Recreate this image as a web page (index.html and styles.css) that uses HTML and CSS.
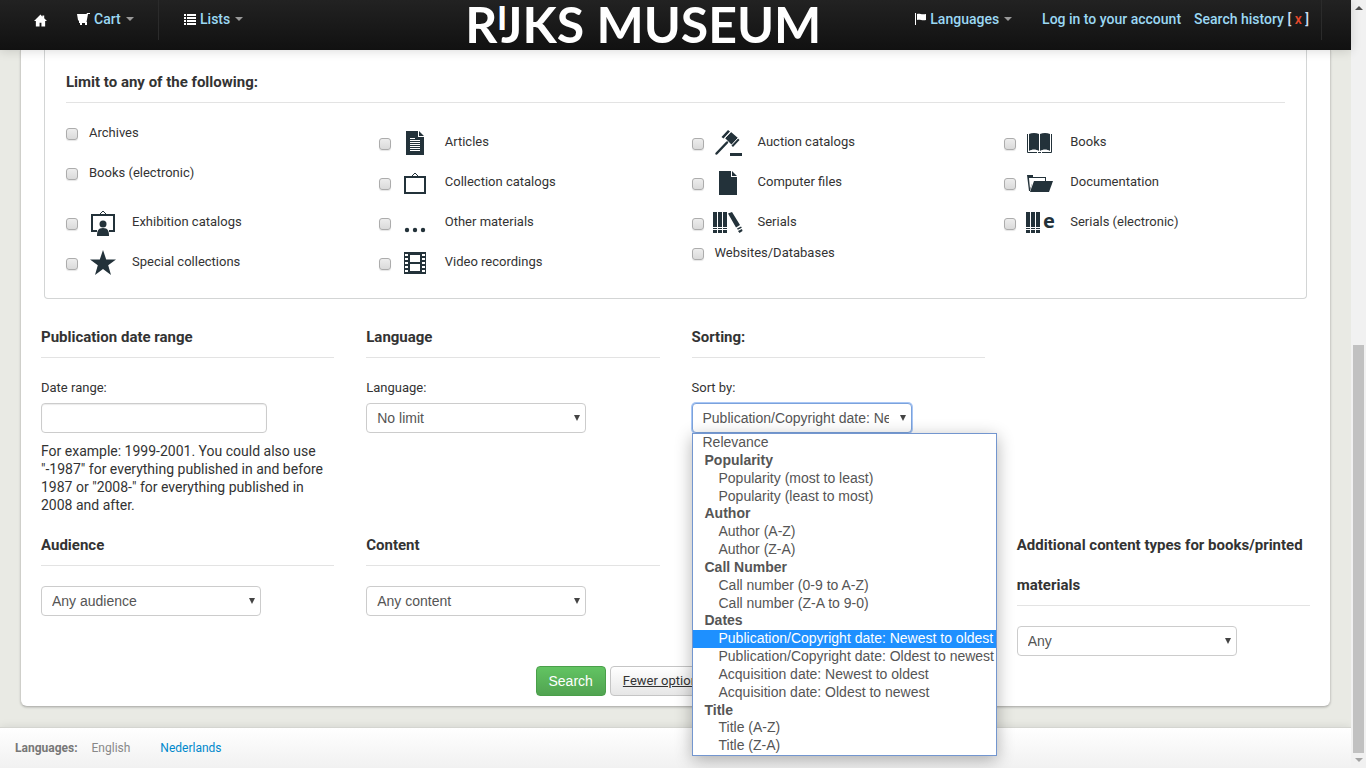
FILE: index.html
```html
<!DOCTYPE html>
<html lang="en">
<head>
<meta charset="utf-8">
<title>Rijksmuseum Research Library – Advanced search</title>
<link rel="stylesheet" href="styles.css">
</head>
<body>
<div class="page">
  <header class="navbar">
    <nav class="nav nav-left" aria-label="Main">
      <a class="nav-home" href="#" aria-label="Home"><svg width="13" height="13" viewBox="0 0 14 13" fill="#fff"><path d="M7 0 0 7h2v6h4V9h2v4h4V7h2l-3-3V1H9v1.500z"/></svg></a>
      <a class="nav-cart" href="#"><svg width="13" height="12" viewBox="0 0 13 12" fill="#fff"><path d="M0 1h9.500L10 0h3v1h-2L9.500 9H2V8L1 7z"/><path d="M2 9h8v1H2zM3 10h2v2H3zM8 10h2v2H8z"/></svg>Cart<i class="caret"></i></a>
      <a class="nav-lists" href="#"><svg width="12" height="11" viewBox="0 0 12 11" fill="#fff"><path d="M0 0h2v2H0zM3 0h9v2H3zM0 3h2v2H0zM3 3h9v2H3zM0 6h2v2H0zM3 6h9v2H3zM0 9h2v2H0zM3 9h9v2H3z"/></svg>Lists<i class="caret"></i></a>
    </nav>
    <a class="logo" href="#">R<span class="logo-i">I</span>JKS MUSEUM</a>
    <nav class="nav nav-right" aria-label="User">
      <a class="nav-lang" href="#"><svg width="11" height="12" viewBox="0 0 11 12" fill="#fff"><path d="M0 0h1v12H0zM2 1c3-1 4 1 9 0v6c-4 1-6-1-9 0z"/></svg>Languages<i class="caret"></i></a>
      <a class="nav-login" href="#">Log in to your account</a>
      <span class="nav-history"><a href="#">Search history</a> [ <a class="clear" href="#">x</a> ]</span>
    </nav>
  </header>

  <main class="panel">
    <form>
      <section class="limits">
        <h3>Limit to any of the following:</h3>
        <div class="types">
          <label class="type plain"><input type="checkbox">Archives</label>
          <label class="type"><input type="checkbox"><svg class="icon" viewBox="0 0 28 28"><path d="M5 2h12v6h6v18H5zM18 2l5 5h-5z"/><path d="M9 9.500h5M9 11.500h10M9 13.500h10M9 15.500h10M9 17.500h10M9 19.500h10M9 21.500h10" stroke="#fff"/></svg>Articles</label>
          <label class="type"><input type="checkbox"><svg class="icon" viewBox="0 0 28 28"><path d="m7.500 8 6.500-7 2 1.500-6.500 7zM11 9l6-6 7 6-6 7zM17.500 16.500l6.500-7 1.500 1.500-6.500 7zM16 24h12v3H16z"/><path d="M13 13.500 2.500 24.500" stroke="#23323a" stroke-width="2.500" stroke-linecap="round"/><path d="m10.500 9.500 6-6.500M17.500 16l6.500-7" stroke="#fff"/></svg>Auction catalogs</label>
          <label class="type"><input type="checkbox"><svg class="icon" viewBox="0 0 28 28"><path d="M3 5c3-1.500 7-1.500 10 0v17c-3-2-7-2-10 0zM14 5c3-1.500 7-1.500 10 0v17c-3-2-7-2-10 0z"/><path d="M1.500 5v18.500H11M25.500 5v18.500H16M12 23.500h3" fill="none" stroke="#23323a"/></svg>Books</label>

          <label class="type plain"><input type="checkbox">Books (electronic)</label>
          <label class="type"><input type="checkbox"><svg class="icon" viewBox="0 0 28 28"><path d="M4 8h20v16H4z" fill="none" stroke="#23323a" stroke-width="2"/><path d="m11 7 3-3 3 3" fill="none" stroke="#23323a"/></svg>Collection catalogs</label>
          <label class="type"><input type="checkbox"><svg class="icon" viewBox="0 0 28 28"><path d="M5 2h12v6h6v18H5zM18 2l5 5h-5z"/></svg>Computer files</label>
          <label class="type"><input type="checkbox"><svg class="icon" viewBox="0 0 28 28"><path d="M1 6h6v2h13v4h-1V9H4l2 5-2 8H3z"/><path d="M8 12h19l-4 11H4z"/><path d="M3 9h3l1 3-3 8z" fill="#fff"/></svg>Documentation</label>

          <label class="type"><input type="checkbox"><svg class="icon" viewBox="0 0 28 28"><path d="M9 22H4V6h22v16h-5" fill="none" stroke="#23323a" stroke-width="2"/><path d="m12 5 3-3 3 3" fill="none" stroke="#23323a"/><circle cx="15" cy="15" r="3.500"/><path d="M9 27c0-5 1-8 6-8s6 3 6 8z"/></svg>Exhibition catalogs</label>
          <label class="type"><input type="checkbox"><svg class="icon" viewBox="0 0 28 28"><circle cx="6" cy="21" r="2.200"/><circle cx="14" cy="21" r="2.200"/><circle cx="22" cy="21" r="2.200"/></svg>Other materials</label>
          <label class="type"><input type="checkbox"><svg class="icon" viewBox="0 0 28 28"><path d="M-1 3h4v15h-4zM4 3h4v15H4zM9 3h4v15H9zM-1 19h4v1h-4zM4 19h4v1H4zM9 19h4v1H9zM-1 21h4v3h-4zM4 21h4v3H4zM9 21h4v3H9z"/><path d="m14 4.500 4-1.500 8 13-4 2.500zM23 19.500l4-2 .800 1.200-4 2zM24 22l4-2 .500 2-3 2z"/></svg>Serials</label>
          <label class="type"><input type="checkbox"><svg class="icon" viewBox="0 0 28 28"><path d="M0 3h4v15H0zM5 3h4v15H5zM10 3h4v15h-4zM0 19h4v1H0zM5 19h4v1H5zM10 19h4v1h-4zM0 21h4v3H0zM5 21h4v3H5zM10 21h4v3h-4z"/><text class="icon-letter" x="17" y="19">e</text></svg>Serials (electronic)</label>

          <label class="type"><input type="checkbox"><svg class="icon" viewBox="0 0 28 28"><path d="m15 1 3.200 9.500H28l-7.800 5.800L23 26l-8-6-8 6 2.800-9.700L2 10.500h9.800z"/></svg>Special collections</label>
          <label class="type"><input type="checkbox"><svg class="icon" viewBox="0 0 28 28"><path d="M3 3h22v22H3z"/><path d="M9 6h10v7H9zM9 15h10v7H9zM4 5h3v2H4zM4 9h3v2H4zM4 13h3v2H4zM4 17h3v2H4zM4 21h3v2H4zM21 5h3v2h-3zM21 9h3v2h-3zM21 13h3v2h-3zM21 17h3v2h-3zM21 21h3v2h-3z" fill="#fff"/></svg>Video recordings</label>
          <label class="type plain"><input type="checkbox">Websites/Databases</label>
        </div>
      </section>

      <div class="options">
        <section>
          <h3>Publication date range</h3>
          <label class="field-label" for="date">Date range:</label>
          <input class="text-box" id="date" type="text">
          <p class="help">For example: 1999-2001. You could also use "-1987" for everything published in and before 1987 or "2008-" for everything published in 2008 and after.</p>
        </section>
        <section>
          <h3>Language</h3>
          <label class="field-label" for="language">Language:</label>
          <div class="select"><select id="language"><option>No limit</option></select></div>
        </section>
        <section>
          <h3>Sorting:</h3>
          <label class="field-label" for="sort">Sort by:</label>
          <div class="select open">
            <select id="sort"><option>Publication/Copyright date: Newest to oldest</option></select>
            <ul class="menu" role="listbox" aria-label="Sort by">
              <li class="top" role="option">Relevance</li>
              <li class="group">Popularity</li>
              <li role="option">Popularity (most to least)</li>
              <li role="option">Popularity (least to most)</li>
              <li class="group">Author</li>
              <li role="option">Author (A-Z)</li>
              <li role="option">Author (Z-A)</li>
              <li class="group">Call Number</li>
              <li role="option">Call number (0-9 to A-Z)</li>
              <li role="option">Call number (Z-A to 9-0)</li>
              <li class="group">Dates</li>
              <li class="selected" role="option" aria-selected="true">Publication/Copyright date: Newest to oldest</li>
              <li role="option">Publication/Copyright date: Oldest to newest</li>
              <li role="option">Acquisition date: Newest to oldest</li>
              <li role="option">Acquisition date: Oldest to newest</li>
              <li class="group">Title</li>
              <li role="option">Title (A-Z)</li>
              <li role="option">Title (Z-A)</li>
            </ul>
          </div>
        </section>
        <section></section>
        <section>
          <h3><label for="audience">Audience</label></h3>
          <div class="select"><select id="audience"><option>Any audience</option></select></div>
        </section>
        <section>
          <h3><label for="content">Content</label></h3>
          <div class="select"><select id="content"><option>Any content</option></select></div>
        </section>
        <section></section>
        <section>
          <h3><label for="additional">Additional content types for books/printed materials</label></h3>
          <div class="select"><select id="additional"><option>Any</option></select></div>
        </section>
      </div>

      <div class="actions">
        <button class="btn btn-search" type="submit">Search</button>
        <a class="btn btn-plain" href="#">Fewer options</a>
      </div>
    </form>
  </main>

  <footer class="footer">
    <strong>Languages:</strong>
    <span>English</span>
    <a href="#">Nederlands</a>
  </footer>
</div>
<div class="scrollbar" aria-hidden="true">
  <i class="arrow-up"></i>
  <i class="thumb"></i>
  <i class="arrow-down"></i>
</div>
</body>
</html>
```
FILE: styles.css
```css
* { box-sizing: border-box; }
body {
  margin: 0;
  display: flex;
  min-height: 100vh;
  background: #e9eae4;
  color: #333;
  font: 13px/20px Roboto, "Noto Sans", sans-serif;
}
a { text-decoration: none; }
.page { flex: 1; min-width: 0; display: flex; flex-direction: column; }

/* Top bar */
.navbar {
  position: relative;
  z-index: 1;
  display: flex;
  align-items: flex-start;
  height: 50px;
  padding: 0 29px 0 34px;
  background: linear-gradient(#222, #111);
  box-shadow: 0 1px 10px rgba(0, 0, 0, .15);
  color: #cde;
  font-size: 14px;
  font-weight: 500;
  white-space: nowrap;
}
.nav { display: flex; }
.nav > * { height: 40px; line-height: 38px; }
.nav a { color: #9bd8f3; }
.nav > a { display: flex; align-items: center; padding-bottom: 2px; }
.nav svg { margin-right: 4px; }
.nav > .nav-home { width: 43px; padding-bottom: 0; }
.nav-cart { width: 82px; border-right: 1px solid #2b2b2b; }
.nav-lists { padding-left: 25px; }
.caret { margin-left: 5px; border: 4px solid transparent; border-top-color: #999; border-bottom: 0; }
.logo {
  margin-left: 222px;
  color: #fff;
  font: 700 50px/48px Lato, Roboto, sans-serif;
}
.logo-i { margin-right: -6px; font-size: 32px; font-weight: 900; line-height: 1; vertical-align: 13px; }
.nav-right { margin-left: auto; border-right: 1px solid #2b2b2b; padding-right: 12px; }
.nav-login { margin: 0 13px 0 30px; }
.nav .clear { color: #e8492c; }

/* Main panel */
.panel {
  margin: 0 20px 20px;
  padding: 0 20px 10px;
  border: 1px solid #cfcfca;
  border-top: 0;
  border-bottom-color: #b9b9b5;
  border-radius: 0 0 7px 7px;
  background: #fff;
  box-shadow: 0 1px 2px rgba(0, 0, 0, .15);
}
h3 {
  margin: 0 0 20px;
  border-bottom: 1px solid #e3e3e3;
  font-size: 15px;
  font-weight: 700;
  line-height: 40px;
}
.limits {
  margin: 0 3px 18px;
  padding: 12px 21px 15px;
  border: 1px solid #d3d5d5;
  border-top: 0;
  border-radius: 0 0 4px 4px;
}
.types {
  display: grid;
  grid-template-columns: repeat(4, 1fr);
  grid-auto-rows: 40px;
  column-gap: 32px;
  align-items: start;
}
.type { display: flex; align-items: center; height: 38px; }
.type.plain { height: 20px; }
.type input {
  appearance: none;
  flex: none;
  width: 12px;
  height: 12px;
  margin: 4px 11px 0 0;
  border: 1px solid #acacac;
  border-radius: 3px;
  background: linear-gradient(#ededed, #dadada);
  box-shadow: 0 1px 1px rgba(0, 0, 0, .1);
}
.type.plain input { margin-top: 2px; }
.icon { flex: none; width: 28px; height: 28px; margin: 1px 16px 0 -1px; overflow: visible; fill: #23323a; }
.icon-letter { font: 700 20px "Noto Sans", sans-serif; }

/* Options */
.options {
  display: grid;
  grid-template-columns: repeat(4, 1fr);
  gap: 11px 32px;
}
.options section { min-width: 0; }
.field-label { display: block; margin-bottom: 5px; }
.text-box, .select select {
  display: block;
  height: 30px;
  border: 1px solid #ccc;
  border-radius: 4px;
  background: #fff;
  color: #555;
  font: 14px/20px "Liberation Sans", sans-serif;
}
.text-box { width: 226px; padding: 4px 6px; box-shadow: inset 0 1px 1px rgba(0, 0, 0, .08); }
.select { position: relative; width: 220px; }
.select select { appearance: none; width: 100%; padding: 0 22px 0 10px; }
.select::after {
  content: "";
  position: absolute;
  right: 6px;
  top: 12px;
  border: 3px solid transparent;
  border-top: 6px solid #444;
  border-bottom: 0;
}
.select.open select { border-color: #7ba2dc; box-shadow: 0 0 0 1px #a9c7f5; }
.help { margin: 9px 0 0; font-size: 14px; line-height: 18px; }
.menu {
  position: absolute;
  z-index: 2;
  top: 30px;
  left: 0;
  display: grid;
  grid-auto-rows: 1fr;
  width: 305px;
  height: 323px;
  margin: 0;
  padding: 0;
  border: 1px solid #7396cf;
  background: #fff;
  box-shadow: 0 4px 16px rgba(0, 0, 0, .3);
  color: #555;
  font: 14px/17px "Liberation Sans", sans-serif;
  list-style: none;
  white-space: nowrap;
}
.menu li { padding-left: 26px; }
.menu .top { padding-left: 10px; }
.menu .group { padding-left: 12px; font-weight: 700; }
.menu .selected { background: #1e90ff; color: #fff; }

/* Buttons */
.actions { display: flex; gap: 4px; width: 280px; margin: 10px auto 0; }
.btn {
  height: 30px;
  padding: 0 12px;
  border: 1px solid #c5c5c5;
  border-radius: 4px;
  line-height: 28px;
  white-space: nowrap;
}
.btn-search {
  border-color: #4a9f4a;
  background: linear-gradient(#62c462, #51a351);
  color: #fff;
  font-family: "Liberation Sans", sans-serif;
  font-size: 14px;
}
.btn-plain { background: linear-gradient(#fff, #e6e6e6); color: #333; text-decoration: underline; }

/* Footer */
.footer {
  flex: 1;
  display: flex;
  padding: 10px 15px;
  border-top: 1px solid #d4d5d0;
  background: linear-gradient(#fff, #f1f1f1);
  box-shadow: 0 -1px 8px rgba(0, 0, 0, .08);
  color: #777;
  font-size: 12px;
}
.footer strong { font-weight: 700; margin-right: 14px; }
.footer span { margin-right: 30px; color: #888; }
.footer a { color: #0088cc; }

/* Scroll track */
.scrollbar {
  flex: 0 0 15px;
  display: flex;
  flex-direction: column;
  align-items: center;
  padding: 6px 0;
  background: #f1f1f1;
}
.thumb { width: 11px; height: 54%; margin-top: auto; background: #c1c1c1; }
.arrow-up { border: 4px solid transparent; border-top: 0; border-bottom-color: #505050; }
.arrow-down { margin-top: 5px; border: 4px solid transparent; border-bottom: 0; border-top-color: #a3a3a3; }
```
